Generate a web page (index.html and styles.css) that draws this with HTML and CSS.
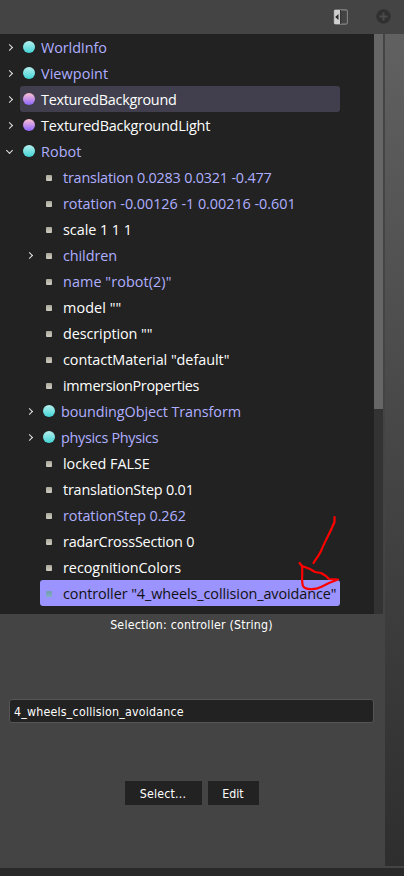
FILE: index.html
```html
<!DOCTYPE html>
<html lang="en">
<head>
<meta charset="utf-8">
<title>Scene Tree</title>
<link rel="stylesheet" href="styles.css">
</head>
<body>
<header class="toolbar">
  <svg class="dock-icon" width="16" height="17" viewBox="0 0 16 17"><rect x="1.200" y=".9" width="13.200" height="14.200" rx="1.5" fill="none" stroke="#858585" stroke-width="1.1"/><path d="M1.200 1h6v14h-6z" fill="#d0d0d0"/><path d="M7.600 1v14" stroke="#303030"/><path d="M5.500 5v6L2.200 8z" fill="#292929"/></svg>
  <svg class="add-icon" width="15" height="15" viewBox="0 0 15 15"><circle cx="7.5" cy="7.5" r="7.2" fill="#303030"/><path d="M7.500 3.500v8M3.500 7.500h8" stroke="#4a4a4a" stroke-width="2"/></svg>
</header>
<div class="workspace">
  <aside class="dock">
    <div class="tree-area">
      <ul class="tree">
        <li class="row changed"><i class="arrow"></i><i class="node"></i><span>WorldInfo</span></li>
        <li class="row changed wide"><i class="arrow"></i><i class="node"></i><span>Viewpoint</span></li>
        <li class="row hover narrow"><i class="arrow"></i><i class="node proto"></i><span>TexturedBackground</span></li>
        <li class="row snug"><i class="arrow"></i><i class="node proto"></i><span>TexturedBackgroundLight</span></li>
        <li class="row changed wide"><i class="arrow open"></i><i class="node"></i><span>Robot</span></li>
        <li class="row field changed snug"><i class="dot"></i><span>translation 0.0283 0.0321 -0.477</span></li>
        <li class="row field changed loose"><i class="dot"></i><span>rotation -0.00126 -1 0.00216 -0.601</span></li>
        <li class="row field loose"><i class="dot"></i><span>scale 1 1 1</span></li>
        <li class="row field changed"><i class="arrow"></i><i class="dot"></i><span>children</span></li>
        <li class="row field changed wide"><i class="dot"></i><span>name "robot(2)"</span></li>
        <li class="row field wide"><i class="dot"></i><span>model ""</span></li>
        <li class="row field"><i class="dot"></i><span>description ""</span></li>
        <li class="row field loose"><i class="dot"></i><span>contactMaterial "default"</span></li>
        <li class="row field narrow"><i class="dot"></i><span>immersionProperties</span></li>
        <li class="row child changed"><i class="arrow"></i><i class="node"></i><span>boundingObject Transform</span></li>
        <li class="row child changed narrow"><i class="arrow"></i><i class="node"></i><span>physics Physics</span></li>
        <li class="row field loose"><i class="dot"></i><span>locked FALSE</span></li>
        <li class="row field snug"><i class="dot"></i><span>translationStep 0.01</span></li>
        <li class="row field changed"><i class="dot"></i><span>rotationStep 0.262</span></li>
        <li class="row field snug"><i class="dot"></i><span>radarCrossSection 0</span></li>
        <li class="row field loose"><i class="dot"></i><span>recognitionColors</span></li>
        <li class="row field selected"><i class="dot"></i><span>controller "4_wheels_collision_avoidance"</span></li>
      </ul>
      <div class="scrollbar"><div class="thumb"></div></div>
    </div>
    <section class="editor">
      <p class="caption">Selection: controller (String)</p>
      <input class="value" type="text" value="4_wheels_collision_avoidance">
      <div class="actions"><button class="select">Select...</button><button class="edit">Edit</button></div>
    </section>
  </aside>
  <main class="viewport"></main>
</div>
<footer class="status"></footer>
<svg class="marker" width="50" height="90" viewBox="295 510 50 90"><path d="M334.500 517L334.500 522C330 533 326 539 321 551C318 557 316 559 313.500 563M299.500 563L302 566L310 569L315 572L321 573L326 576L329 579L338 579.500L329 583L321 587C315 590 305 590 303 586C301 581 303 572 302 566"/></svg>
</body>
</html>
```
FILE: styles.css
```css
* { box-sizing: border-box; }
body {
  margin: 0;
  width: 404px;
  height: 876px;
  overflow: hidden;
  position: relative;
  display: flex;
  flex-direction: column;
  background: #444;
  color: #fff;
  font-family: "Open Sans", "Noto Sans", sans-serif;
}
.toolbar {
  height: 34px;
  flex: none;
  display: flex;
  justify-content: flex-end;
  gap: 27px;
  padding: 9px 13px 0 0;
}
.workspace { display: flex; height: 832px; flex: none; }
.dock { width: 385px; }
.viewport { flex: 1; background: linear-gradient(#616161, #484848 46%, #2e2e2e); }
.status { height: 8px; margin-top: 2px; background: #292929; }

.tree-area { display: flex; height: 580px; width: 383px; background: #222; }
.tree { flex: 1; margin: 0; padding: 0; list-style: none; }
.scrollbar { width: 9px; background: #333; }
.thumb { height: 375px; background: #666; }
.row {
  height: 26px;
  display: grid;
  grid-template-columns: 23px 18px auto;
  grid-template-rows: 26px;
  align-items: center;
  position: relative;
  font-size: 14.4px;
  line-height: 26px;
  letter-spacing: -0.08px;
  white-space: nowrap;
}
.row > span { grid-column: 3; z-index: 1; padding-top: 2px; }
.narrow { letter-spacing: -0.3px; }
.snug { letter-spacing: -0.2px; }
.loose { letter-spacing: -0.04px; }
.wide { letter-spacing: 0.08px; }
.field { grid-template-columns: 46px 17px auto; }
.child { grid-template-columns: 43px 18px auto; }
.changed { color: #afafff; }
.hover::before, .selected::before {
  content: "";
  position: absolute;
  inset: 0 34px 0 20px;
  border-radius: 3px;
  background: #413f4e;
}
.selected { color: #111; }
.selected::before { left: 40px; background: #9b93ff; }

.arrow {
  grid-column: 1;
  grid-row: 1;
  width: 5px;
  height: 5px;
  margin: 1px 0 0 7px;
  border: solid #e4e4e4;
  border-width: 1.5px 1.5px 0 0;
  transform: rotate(45deg);
}
.arrow.open { transform: translateY(-1px) rotate(135deg); }
.field .arrow, .child .arrow { margin-left: 27px; }
.node {
  grid-column: 2;
  grid-row: 1;
  width: 12px;
  height: 12px;
  border-radius: 50%;
  z-index: 1;
  background: linear-gradient(#b5f0ee, #40d4d4);
}
.proto { background: linear-gradient(#ffc0d2, #8c66ff); }
.dot {
  grid-column: 2;
  grid-row: 1;
  width: 6px;
  height: 6px;
  margin-top: 2px;
  border-radius: 1px;
  z-index: 1;
  background: linear-gradient(#aaa99b, #cecbc0);
}
.selected .dot { background: linear-gradient(#709db0, #83aec5); }

.editor {
  width: 383px;
  font-family: "DejaVu Sans Condensed", "DejaVu Sans", sans-serif;
  font-stretch: condensed;
  font-size: 12.3px;
  letter-spacing: 0.22px;
}
.caption { margin: 0; height: 22px; line-height: 23px; text-align: center; }
.value {
  display: block;
  width: 365px;
  height: 24px;
  margin: 63px 0 0 9px;
  padding: 2px 4px 0;
  border: 1px solid #555;
  border-radius: 3px;
  background: #222;
  color: #fff;
  font: inherit;
  letter-spacing: inherit;
}
.actions { display: flex; justify-content: center; gap: 6px; margin-top: 58px; }
.actions button {
  height: 24px;
  padding: 2px 0 0;
  border: 0;
  background: #222;
  color: #fff;
  font: inherit;
  letter-spacing: 0.2px;
}
.actions .select { width: 77px; }
.actions .edit { width: 51px; letter-spacing: 0; }
.marker { position: absolute; left: 295px; top: 510px; }
.marker path { fill: none; stroke: #f00; stroke-width: 2.2; stroke-linecap: round; stroke-linejoin: round; }
```
